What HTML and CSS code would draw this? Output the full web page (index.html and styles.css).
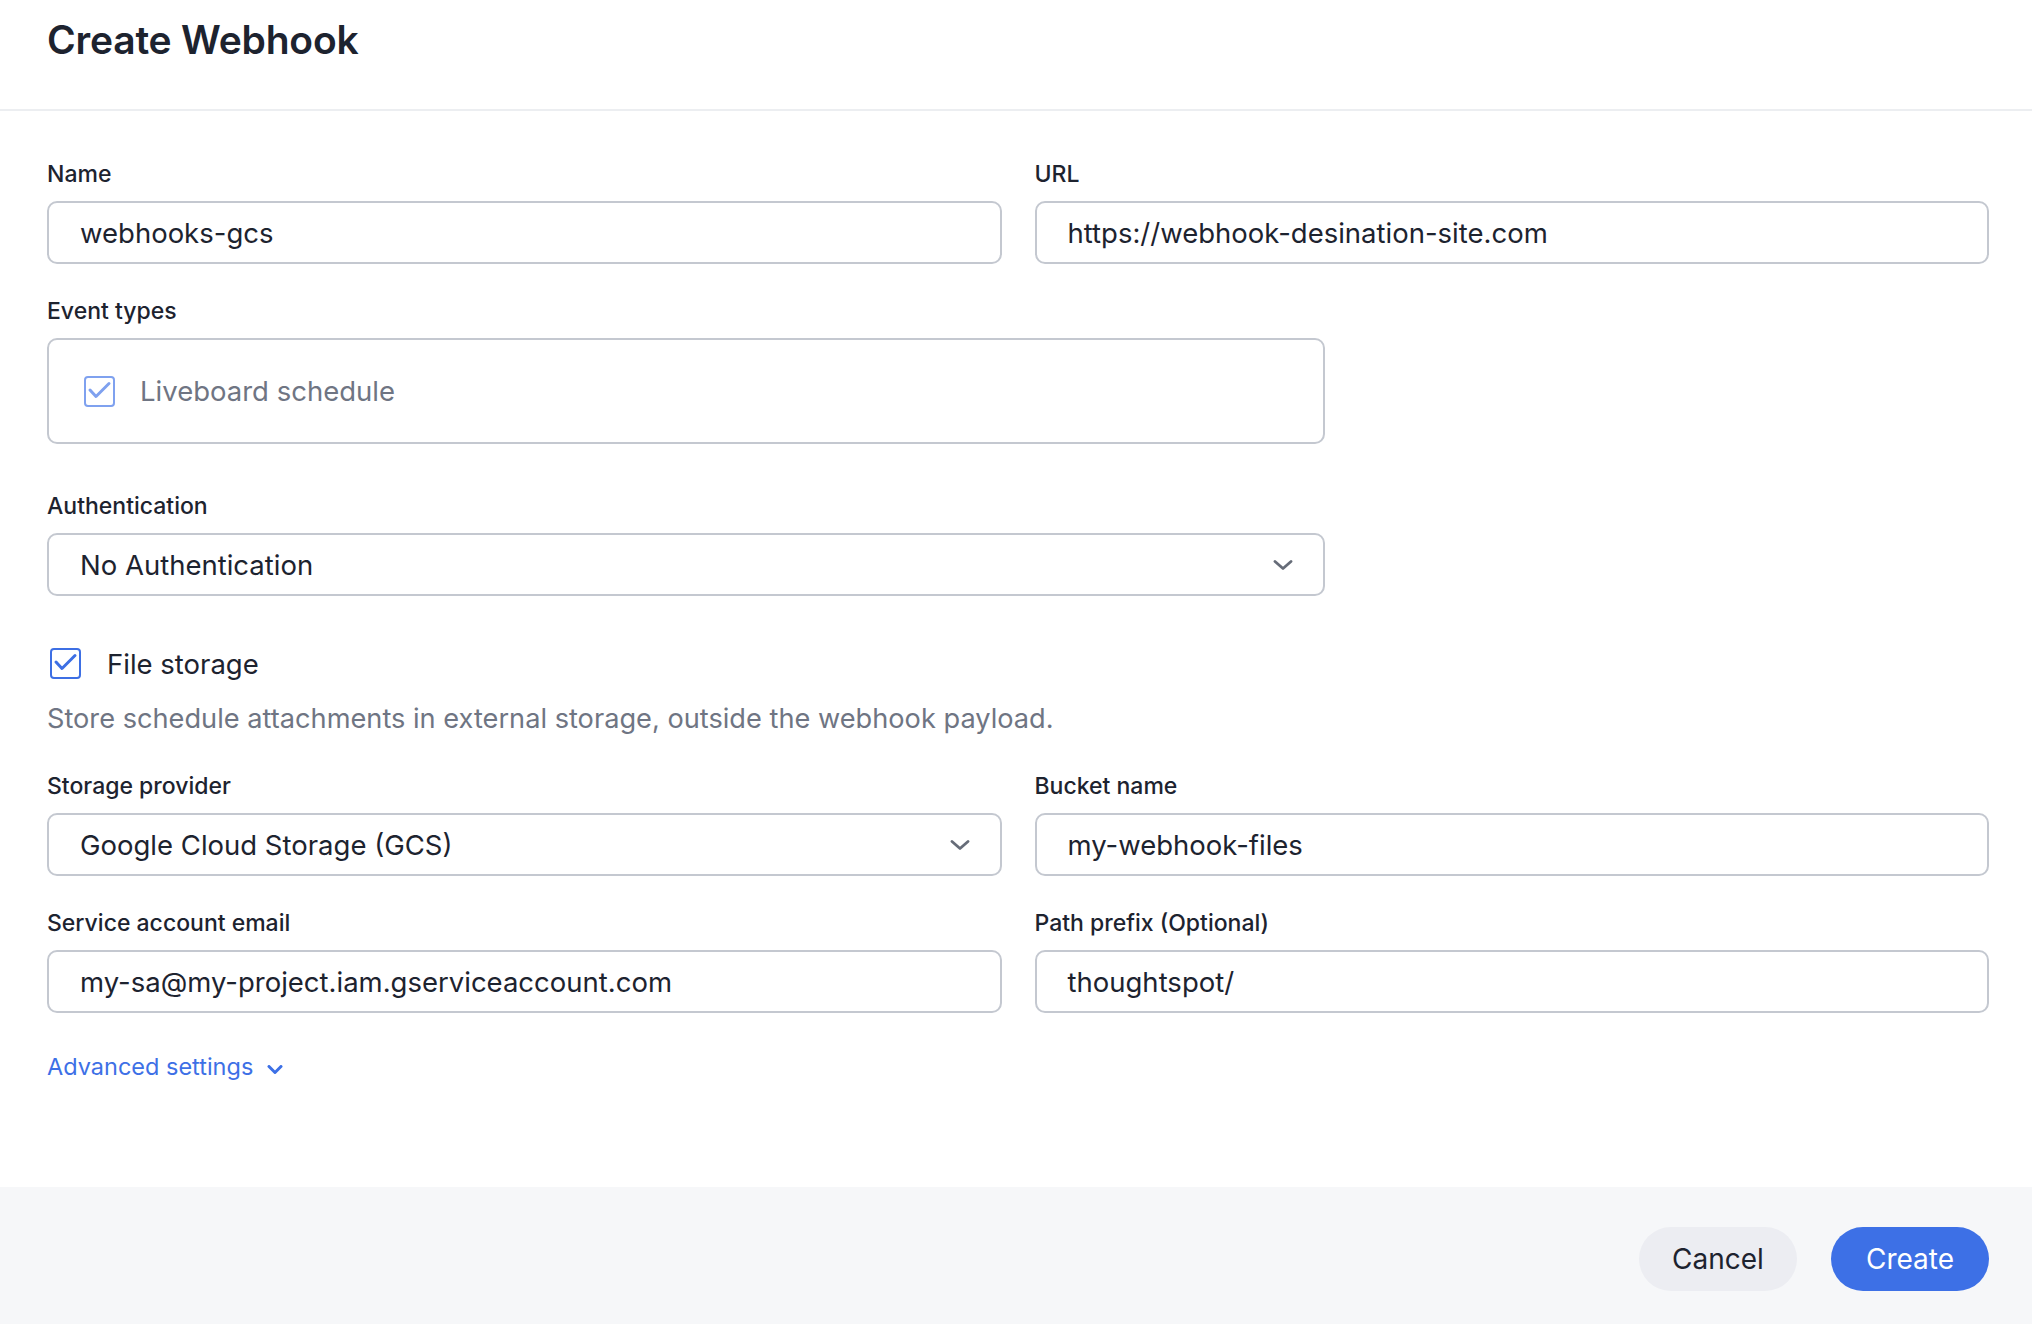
FILE: index.html
```html
<!DOCTYPE html>
<html lang="en">
<head>
  <meta charset="UTF-8">
  <meta name="viewport" content="width=device-width, initial-scale=1.0">
  <title>Create Webhook</title>
  <link rel="stylesheet" href="styles.css">
</head>
<body>
  <div class="modal">
    <header class="modal-header">
      <h1>Create Webhook</h1>
    </header>

    <form class="modal-body">
      <div class="row">
        <div class="field">
          <label class="label">Name</label>
          <div class="input">webhooks-gcs</div>
        </div>
        <div class="field">
          <label class="label">URL</label>
          <div class="input">https://webhook-desination-site.com</div>
        </div>
      </div>

      <div class="field half">
        <label class="label">Event types</label>
        <div class="event-box">
          <span class="check check-muted">
            <svg viewBox="0 0 31 31" width="31" height="31"><path d="M6 14l6 6.5L25 7.5" fill="none" stroke="currentColor" stroke-width="3" stroke-linecap="round" stroke-linejoin="round"/></svg>
          </span>
          <span class="event-text">Liveboard schedule</span>
        </div>
      </div>

      <div class="field half auth">
        <label class="label">Authentication</label>
        <div class="input select">
          <span>No Authentication</span>
          <svg class="chevron" viewBox="0 0 20 10" width="20" height="10"><path d="M2 1.5l8 7 8-7" fill="none" stroke="currentColor" stroke-width="2.8" stroke-linecap="round" stroke-linejoin="round"/></svg>
        </div>
      </div>

      <div class="storage-toggle">
        <span class="check">
          <svg viewBox="0 0 31 31" width="31" height="31"><path d="M6 14l6 6.5L25 7.5" fill="none" stroke="currentColor" stroke-width="3" stroke-linecap="round" stroke-linejoin="round"/></svg>
        </span>
        <span class="toggle-text">File storage</span>
      </div>
      <p class="hint">Store schedule attachments in external storage, outside the webhook payload.</p>

      <div class="row">
        <div class="field">
          <label class="label">Storage provider</label>
          <div class="input select">
            <span>Google Cloud Storage (GCS)</span>
            <svg class="chevron" viewBox="0 0 20 10" width="20" height="10"><path d="M2 1.5l8 7 8-7" fill="none" stroke="currentColor" stroke-width="2.8" stroke-linecap="round" stroke-linejoin="round"/></svg>
          </div>
        </div>
        <div class="field">
          <label class="label">Bucket name</label>
          <div class="input">my-webhook-files</div>
        </div>
      </div>

      <div class="row">
        <div class="field">
          <label class="label">Service account email</label>
          <div class="input">my-sa@my-project.iam.gserviceaccount.com</div>
        </div>
        <div class="field">
          <label class="label">Path prefix (Optional)</label>
          <div class="input">thoughtspot/</div>
        </div>
      </div>

      <a class="advanced" href="#">Advanced settings
        <svg viewBox="0 0 16 9" width="16" height="9"><path d="M2 1.5l6 6 6-6" fill="none" stroke="currentColor" stroke-width="3" stroke-linecap="round" stroke-linejoin="round"/></svg>
      </a>
    </form>

    <footer class="modal-footer">
      <button class="btn btn-secondary" type="button">Cancel</button>
      <button class="btn btn-primary" type="button">Create</button>
    </footer>
  </div>
</body>
</html>
```

FILE: styles.css
```css
body {
  margin: 0;
  font-family: Inter, "Liberation Sans", sans-serif;
  color: #1d232f;
  background-color: #fff;
}

.modal {
  display: flex;
  flex-direction: column;
  height: 100vh;
}

/* Header */
.modal-header {
  box-sizing: border-box;
  height: 111px;
  padding: 16px 47px 0;
  border-bottom: 2px solid #eceef1;
}

.modal-header h1 {
  margin: 0;
  font-size: 39px;
  font-weight: 600;
  line-height: 48px;
  letter-spacing: -0.2px;
}

/* Form */
.modal-body {
  flex: 1;
  display: flex;
  flex-direction: column;
  padding: 49px 43px 0 47px;
}

.row {
  display: grid;
  grid-template-columns: 1fr 1fr;
  column-gap: 33px;
  margin-bottom: 33px;
}

.field {
  display: flex;
  flex-direction: column;
}

.field.half {
  width: 1278px;
}

.label {
  font-size: 23px;
  font-weight: 500;
  line-height: 28px;
  margin-bottom: 13px;
}

.input {
  box-sizing: border-box;
  height: 63px;
  display: flex;
  align-items: center;
  padding: 0 31px;
  border: 2px solid #c4c8d0;
  border-radius: 10px;
  font-size: 27.5px;
  color: #1d232f;
  white-space: nowrap;
}

.select {
  justify-content: space-between;
  padding-right: 30px;
}

.chevron {
  color: #666c78;
}

.event-box {
  box-sizing: border-box;
  height: 106px;
  display: flex;
  align-items: center;
  gap: 25px;
  padding: 0 35px;
  border: 2px solid #c4c8d0;
  border-radius: 10px;
  margin-bottom: 48px;
}

.check {
  box-sizing: border-box;
  width: 31px;
  height: 31px;
  flex-shrink: 0;
  border: 2px solid #3d6fe4;
  border-radius: 4px;
  color: #3d6fe4;
  display: flex;
}

.check svg {
  margin: -2px;
}

.check-muted {
  border-color: #7fa1ef;
  color: #7fa1ef;
}

.event-text {
  font-size: 27.5px;
  color: #6f7583;
}

.auth {
  margin-bottom: 52px;
}

.storage-toggle {
  display: flex;
  align-items: center;
  gap: 26px;
  padding-left: 3px;
  height: 31px;
}

.toggle-text {
  font-size: 27.5px;
}

.hint {
  margin: 22px 0 35px;
  font-size: 27.2px;
  line-height: 36px;
  color: #6f7583;
}

.advanced {
  display: inline-flex;
  align-items: center;
  gap: 14px;
  align-self: flex-start;
  margin-top: 5px;
  font-size: 23.5px;
  line-height: 32px;
  color: #3d70e6;
  text-decoration: none;
}

.advanced svg {
  margin-top: 4px;
}

/* Footer */
.modal-footer {
  box-sizing: border-box;
  height: 137px;
  display: flex;
  justify-content: flex-end;
  align-items: flex-start;
  gap: 34px;
  padding: 40px 43px 0 47px;
  background-color: #f6f7f9;
}

.btn {
  height: 64px;
  min-width: 158px;
  padding: 0 33px;
  border: none;
  border-radius: 32px;
  font-family: inherit;
  font-size: 28px;
  cursor: pointer;
}

.btn-secondary {
  background-color: #ecedf2;
  color: #1d232f;
}

.btn-primary {
  background-color: #3d70e6;
  color: #fff;
}
```
